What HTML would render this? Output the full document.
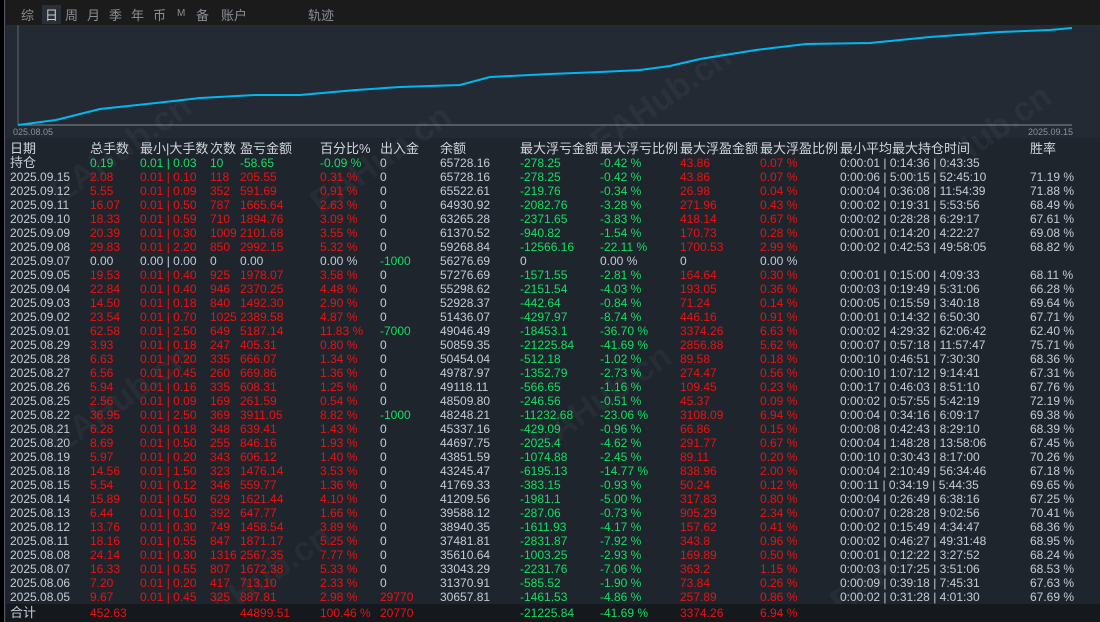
<!DOCTYPE html>
<html style="width:1100px;height:622px;overflow:hidden"><head><meta charset="utf-8"><style>
*{margin:0;padding:0;box-sizing:border-box}
body{width:1100px;height:622px;background:#1f252d;overflow:hidden;position:relative;font-family:"Liberation Sans","Noto Sans CJK SC",sans-serif;font-size:12px;color:#c4ccd8}
#left{position:absolute;left:0;top:0;width:5px;height:622px;background:#000;border-right:1px solid #556}
#top{position:absolute;left:6px;top:0;right:0;height:25px;background:#1b1b1b;color:#8a8f96;font-size:13px}
#top span{position:absolute;top:5px}
#chart{position:absolute;left:6px;top:25px;right:0;height:113px;background:#232a33}
table{position:absolute;left:6px;top:142px;border-collapse:collapse;table-layout:fixed;width:1094px}
td{height:14px;line-height:14px;padding:0;white-space:nowrap;overflow:visible;font-size:12px}
td:first-child{padding-left:4px}
.h td{font-size:13px;color:#d0d6de;height:14px}
.r{color:#f01010}.g{color:#10e060}.w{color:#c4ccd8}
tr.tot td{background:#15181c;height:18px}
.wm{position:absolute;color:rgba(255,255,255,0.04);font-size:34px;font-weight:bold;transform:rotate(-35deg);font-family:"Liberation Sans",sans-serif}
</style></head><body>
<div id="left"></div>
<div id="top">
<span style="left:15px">综</span><span style="left:36px;color:#ccc;background:#2a3038;padding:0 3px">日</span><span style="left:59px">周</span><span style="left:81px">月</span><span style="left:103px">季</span><span style="left:125px">年</span><span style="left:147px">币</span><span style="left:171px;font-size:10px;top:8px">M</span><span style="left:190px">备</span><span style="left:215px">账户</span><span style="left:302px">轨迹</span>
</div>
<div id="chart">
<svg width="1094" height="113" style="position:absolute;left:0;top:0">
<line x1="12" y1="0" x2="12" y2="100" stroke="#666" stroke-width="1"/>
<line x1="12" y1="100" x2="1066" y2="100" stroke="#888" stroke-width="1"/>
<polyline fill="none" stroke="#00b8f0" stroke-width="2" points="12,100 50,95 94,84 150,78 194,73 250,70 294,70 350,65 394,62 454,60 484,52 544,49 594,47 634,45 664,41 694,34 750,25 800,19 864,18 924,12 994,7 1044,5 1066,3"/>
<text x="7" y="110" fill="#8a929c" font-size="9" font-family="Liberation Sans">025.08.05</text>
<text x="1022" y="110" fill="#8a929c" font-size="9" font-family="Liberation Sans">2025.09.15</text>
</svg>
</div>
<div class="wm" style="left:40px;top:130px">EAHub.cn</div>
<div class="wm" style="left:300px;top:140px">EAHub.cn</div>
<div class="wm" style="left:580px;top:80px">EAHub.cn</div>
<div class="wm" style="left:900px;top:120px">EAHub.cn</div>
<div class="wm" style="left:40px;top:380px">EAHub.cn</div>
<div class="wm" style="left:520px;top:380px">EAHub.cn</div>
<div class="wm" style="left:180px;top:560px">EAHub.cn</div>
<div class="wm" style="left:820px;top:540px">EAHub.cn</div>
<table>
<colgroup><col style="width:84px"><col style="width:50px"><col style="width:70px"><col style="width:30px"><col style="width:80px"><col style="width:60px"><col style="width:60px"><col style="width:80px"><col style="width:80px"><col style="width:80px"><col style="width:80px"><col style="width:80px"><col style="width:190px"><col></colgroup>
<tr class="h"><td>日期</td><td>总手数</td><td>最小|大手数</td><td>次数</td><td>盈亏金额</td><td>百分比%</td><td>出入金</td><td>余额</td><td>最大浮亏金额</td><td>最大浮亏比例</td><td>最大浮盈金额</td><td>最大浮盈比例</td><td>最小平均最大持仓时间</td><td>胜率</td></tr>
<tr><td style="font-size:13px">持仓</td><td class="g">0.19</td><td class="g">0.01 | 0.03</td><td class="g">10</td><td class="g">-58.65</td><td class="g">-0.09 %</td><td>0</td><td>65728.16</td><td class="g">-278.25</td><td class="g">-0.42 %</td><td class="r">43.86</td><td class="r">0.07 %</td><td>0:00:01 | 0:14:36 | 0:43:35</td><td></td></tr>
<tr><td>2025.09.15</td><td class="r">2.08</td><td class="r">0.01 | 0.10</td><td class="r">118</td><td class="r">205.55</td><td class="r">0.31 %</td><td>0</td><td>65728.16</td><td class="g">-278.25</td><td class="g">-0.42 %</td><td class="r">43.86</td><td class="r">0.07 %</td><td>0:00:06 | 5:00:15 | 52:45:10</td><td>71.19 %</td></tr>
<tr><td>2025.09.12</td><td class="r">5.55</td><td class="r">0.01 | 0.09</td><td class="r">352</td><td class="r">591.69</td><td class="r">0.91 %</td><td>0</td><td>65522.61</td><td class="g">-219.76</td><td class="g">-0.34 %</td><td class="r">26.98</td><td class="r">0.04 %</td><td>0:00:04 | 0:36:08 | 11:54:39</td><td>71.88 %</td></tr>
<tr><td>2025.09.11</td><td class="r">16.07</td><td class="r">0.01 | 0.50</td><td class="r">787</td><td class="r">1665.64</td><td class="r">2.63 %</td><td>0</td><td>64930.92</td><td class="g">-2082.76</td><td class="g">-3.28 %</td><td class="r">271.96</td><td class="r">0.43 %</td><td>0:00:02 | 0:19:31 | 5:53:56</td><td>68.49 %</td></tr>
<tr><td>2025.09.10</td><td class="r">18.33</td><td class="r">0.01 | 0.59</td><td class="r">710</td><td class="r">1894.76</td><td class="r">3.09 %</td><td>0</td><td>63265.28</td><td class="g">-2371.65</td><td class="g">-3.83 %</td><td class="r">418.14</td><td class="r">0.67 %</td><td>0:00:02 | 0:28:28 | 6:29:17</td><td>67.61 %</td></tr>
<tr><td>2025.09.09</td><td class="r">20.39</td><td class="r">0.01 | 0.30</td><td class="r">1009</td><td class="r">2101.68</td><td class="r">3.55 %</td><td>0</td><td>61370.52</td><td class="g">-940.82</td><td class="g">-1.54 %</td><td class="r">170.73</td><td class="r">0.28 %</td><td>0:00:01 | 0:14:20 | 4:22:27</td><td>69.08 %</td></tr>
<tr><td>2025.09.08</td><td class="r">29.83</td><td class="r">0.01 | 2.20</td><td class="r">850</td><td class="r">2992.15</td><td class="r">5.32 %</td><td>0</td><td>59268.84</td><td class="g">-12566.16</td><td class="g">-22.11 %</td><td class="r">1700.53</td><td class="r">2.99 %</td><td>0:00:02 | 0:42:53 | 49:58:05</td><td>68.82 %</td></tr>
<tr><td>2025.09.07</td><td>0.00</td><td>0.00 | 0.00</td><td>0</td><td>0.00</td><td>0.00 %</td><td class="g">-1000</td><td>56276.69</td><td>0</td><td>0.00 %</td><td>0</td><td>0.00 %</td><td></td><td></td></tr>
<tr><td>2025.09.05</td><td class="r">19.53</td><td class="r">0.01 | 0.40</td><td class="r">925</td><td class="r">1978.07</td><td class="r">3.58 %</td><td>0</td><td>57276.69</td><td class="g">-1571.55</td><td class="g">-2.81 %</td><td class="r">164.64</td><td class="r">0.30 %</td><td>0:00:01 | 0:15:00 | 4:09:33</td><td>68.11 %</td></tr>
<tr><td>2025.09.04</td><td class="r">22.84</td><td class="r">0.01 | 0.40</td><td class="r">946</td><td class="r">2370.25</td><td class="r">4.48 %</td><td>0</td><td>55298.62</td><td class="g">-2151.54</td><td class="g">-4.03 %</td><td class="r">193.05</td><td class="r">0.36 %</td><td>0:00:03 | 0:19:49 | 5:31:06</td><td>66.28 %</td></tr>
<tr><td>2025.09.03</td><td class="r">14.50</td><td class="r">0.01 | 0.18</td><td class="r">840</td><td class="r">1492.30</td><td class="r">2.90 %</td><td>0</td><td>52928.37</td><td class="g">-442.64</td><td class="g">-0.84 %</td><td class="r">71.24</td><td class="r">0.14 %</td><td>0:00:05 | 0:15:59 | 3:40:18</td><td>69.64 %</td></tr>
<tr><td>2025.09.02</td><td class="r">23.54</td><td class="r">0.01 | 0.70</td><td class="r">1025</td><td class="r">2389.58</td><td class="r">4.87 %</td><td>0</td><td>51436.07</td><td class="g">-4297.97</td><td class="g">-8.74 %</td><td class="r">446.16</td><td class="r">0.91 %</td><td>0:00:01 | 0:14:32 | 6:50:30</td><td>67.71 %</td></tr>
<tr><td>2025.09.01</td><td class="r">62.58</td><td class="r">0.01 | 2.50</td><td class="r">649</td><td class="r">5187.14</td><td class="r">11.83 %</td><td class="g">-7000</td><td>49046.49</td><td class="g">-18453.1</td><td class="g">-36.70 %</td><td class="r">3374.26</td><td class="r">6.63 %</td><td>0:00:02 | 4:29:32 | 62:06:42</td><td>62.40 %</td></tr>
<tr><td>2025.08.29</td><td class="r">3.93</td><td class="r">0.01 | 0.18</td><td class="r">247</td><td class="r">405.31</td><td class="r">0.80 %</td><td>0</td><td>50859.35</td><td class="g">-21225.84</td><td class="g">-41.69 %</td><td class="r">2856.88</td><td class="r">5.62 %</td><td>0:00:07 | 0:57:18 | 11:57:47</td><td>75.71 %</td></tr>
<tr><td>2025.08.28</td><td class="r">6.63</td><td class="r">0.01 | 0.20</td><td class="r">335</td><td class="r">666.07</td><td class="r">1.34 %</td><td>0</td><td>50454.04</td><td class="g">-512.18</td><td class="g">-1.02 %</td><td class="r">89.58</td><td class="r">0.18 %</td><td>0:00:10 | 0:46:51 | 7:30:30</td><td>68.36 %</td></tr>
<tr><td>2025.08.27</td><td class="r">6.56</td><td class="r">0.01 | 0.45</td><td class="r">260</td><td class="r">669.86</td><td class="r">1.36 %</td><td>0</td><td>49787.97</td><td class="g">-1352.79</td><td class="g">-2.73 %</td><td class="r">274.47</td><td class="r">0.56 %</td><td>0:00:10 | 1:07:12 | 9:14:41</td><td>67.31 %</td></tr>
<tr><td>2025.08.26</td><td class="r">5.94</td><td class="r">0.01 | 0.16</td><td class="r">335</td><td class="r">608.31</td><td class="r">1.25 %</td><td>0</td><td>49118.11</td><td class="g">-566.65</td><td class="g">-1.16 %</td><td class="r">109.45</td><td class="r">0.23 %</td><td>0:00:17 | 0:46:03 | 8:51:10</td><td>67.76 %</td></tr>
<tr><td>2025.08.25</td><td class="r">2.56</td><td class="r">0.01 | 0.09</td><td class="r">169</td><td class="r">261.59</td><td class="r">0.54 %</td><td>0</td><td>48509.80</td><td class="g">-246.56</td><td class="g">-0.51 %</td><td class="r">45.37</td><td class="r">0.09 %</td><td>0:00:02 | 0:57:55 | 5:42:19</td><td>72.19 %</td></tr>
<tr><td>2025.08.22</td><td class="r">36.95</td><td class="r">0.01 | 2.50</td><td class="r">369</td><td class="r">3911.05</td><td class="r">8.82 %</td><td class="g">-1000</td><td>48248.21</td><td class="g">-11232.68</td><td class="g">-23.06 %</td><td class="r">3108.09</td><td class="r">6.94 %</td><td>0:00:04 | 0:34:16 | 6:09:17</td><td>69.38 %</td></tr>
<tr><td>2025.08.21</td><td class="r">6.28</td><td class="r">0.01 | 0.18</td><td class="r">348</td><td class="r">639.41</td><td class="r">1.43 %</td><td>0</td><td>45337.16</td><td class="g">-429.09</td><td class="g">-0.96 %</td><td class="r">66.86</td><td class="r">0.15 %</td><td>0:00:08 | 0:42:43 | 8:29:10</td><td>68.39 %</td></tr>
<tr><td>2025.08.20</td><td class="r">8.69</td><td class="r">0.01 | 0.50</td><td class="r">255</td><td class="r">846.16</td><td class="r">1.93 %</td><td>0</td><td>44697.75</td><td class="g">-2025.4</td><td class="g">-4.62 %</td><td class="r">291.77</td><td class="r">0.67 %</td><td>0:00:04 | 1:48:28 | 13:58:06</td><td>67.45 %</td></tr>
<tr><td>2025.08.19</td><td class="r">5.97</td><td class="r">0.01 | 0.20</td><td class="r">343</td><td class="r">606.12</td><td class="r">1.40 %</td><td>0</td><td>43851.59</td><td class="g">-1074.88</td><td class="g">-2.45 %</td><td class="r">89.11</td><td class="r">0.20 %</td><td>0:00:10 | 0:30:43 | 8:17:00</td><td>70.26 %</td></tr>
<tr><td>2025.08.18</td><td class="r">14.56</td><td class="r">0.01 | 1.50</td><td class="r">323</td><td class="r">1476.14</td><td class="r">3.53 %</td><td>0</td><td>43245.47</td><td class="g">-6195.13</td><td class="g">-14.77 %</td><td class="r">838.96</td><td class="r">2.00 %</td><td>0:00:04 | 2:10:49 | 56:34:46</td><td>67.18 %</td></tr>
<tr><td>2025.08.15</td><td class="r">5.54</td><td class="r">0.01 | 0.12</td><td class="r">346</td><td class="r">559.77</td><td class="r">1.36 %</td><td>0</td><td>41769.33</td><td class="g">-383.15</td><td class="g">-0.93 %</td><td class="r">50.24</td><td class="r">0.12 %</td><td>0:00:11 | 0:34:19 | 5:44:35</td><td>69.65 %</td></tr>
<tr><td>2025.08.14</td><td class="r">15.89</td><td class="r">0.01 | 0.50</td><td class="r">629</td><td class="r">1621.44</td><td class="r">4.10 %</td><td>0</td><td>41209.56</td><td class="g">-1981.1</td><td class="g">-5.00 %</td><td class="r">317.83</td><td class="r">0.80 %</td><td>0:00:04 | 0:26:49 | 6:38:16</td><td>67.25 %</td></tr>
<tr><td>2025.08.13</td><td class="r">6.44</td><td class="r">0.01 | 0.10</td><td class="r">392</td><td class="r">647.77</td><td class="r">1.66 %</td><td>0</td><td>39588.12</td><td class="g">-287.06</td><td class="g">-0.73 %</td><td class="r">905.29</td><td class="r">2.34 %</td><td>0:00:07 | 0:28:28 | 9:02:56</td><td>70.41 %</td></tr>
<tr><td>2025.08.12</td><td class="r">13.76</td><td class="r">0.01 | 0.30</td><td class="r">749</td><td class="r">1458.54</td><td class="r">3.89 %</td><td>0</td><td>38940.35</td><td class="g">-1611.93</td><td class="g">-4.17 %</td><td class="r">157.62</td><td class="r">0.41 %</td><td>0:00:02 | 0:15:49 | 4:34:47</td><td>68.36 %</td></tr>
<tr><td>2025.08.11</td><td class="r">18.16</td><td class="r">0.01 | 0.55</td><td class="r">847</td><td class="r">1871.17</td><td class="r">5.25 %</td><td>0</td><td>37481.81</td><td class="g">-2831.87</td><td class="g">-7.92 %</td><td class="r">343.8</td><td class="r">0.96 %</td><td>0:00:02 | 0:46:27 | 49:31:48</td><td>68.95 %</td></tr>
<tr><td>2025.08.08</td><td class="r">24.14</td><td class="r">0.01 | 0.30</td><td class="r">1316</td><td class="r">2567.35</td><td class="r">7.77 %</td><td>0</td><td>35610.64</td><td class="g">-1003.25</td><td class="g">-2.93 %</td><td class="r">169.89</td><td class="r">0.50 %</td><td>0:00:01 | 0:12:22 | 3:27:52</td><td>68.24 %</td></tr>
<tr><td>2025.08.07</td><td class="r">16.33</td><td class="r">0.01 | 0.55</td><td class="r">807</td><td class="r">1672.38</td><td class="r">5.33 %</td><td>0</td><td>33043.29</td><td class="g">-2231.76</td><td class="g">-7.06 %</td><td class="r">363.2</td><td class="r">1.15 %</td><td>0:00:03 | 0:17:25 | 3:51:06</td><td>68.53 %</td></tr>
<tr><td>2025.08.06</td><td class="r">7.20</td><td class="r">0.01 | 0.20</td><td class="r">417</td><td class="r">713.10</td><td class="r">2.33 %</td><td>0</td><td>31370.91</td><td class="g">-585.52</td><td class="g">-1.90 %</td><td class="r">73.84</td><td class="r">0.26 %</td><td>0:00:09 | 0:39:18 | 7:45:31</td><td>67.63 %</td></tr>
<tr><td>2025.08.05</td><td class="r">9.67</td><td class="r">0.01 | 0.45</td><td class="r">325</td><td class="r">887.81</td><td class="r">2.98 %</td><td class="r">29770</td><td>30657.81</td><td class="g">-1461.53</td><td class="g">-4.86 %</td><td class="r">257.89</td><td class="r">0.86 %</td><td>0:00:02 | 0:31:28 | 4:01:30</td><td>67.69 %</td></tr>
<tr class="tot"><td style="font-size:13px">合计</td><td class="r">452.63</td><td></td><td></td><td class="r">44899.51</td><td class="r">100.46 %</td><td class="r">20770</td><td></td><td class="g">-21225.84</td><td class="g">-41.69 %</td><td class="r">3374.26</td><td class="r">6.94 %</td><td></td><td></td></tr>
</table>
</body></html>
